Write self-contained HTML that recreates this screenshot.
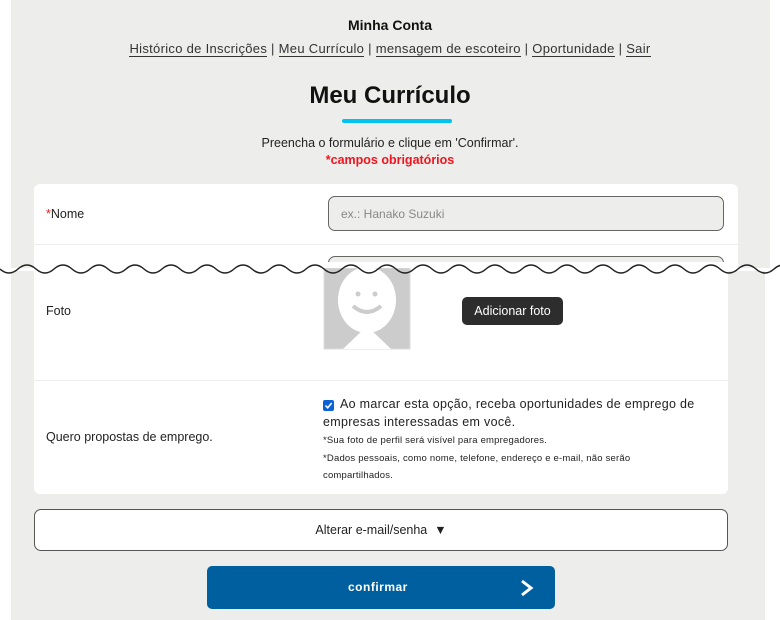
<!DOCTYPE html>
<html><head><meta charset="utf-8"><style>
body{margin:0;width:780px;height:620px;background:#fff;font-family:"Liberation Sans",sans-serif;position:relative;overflow:hidden;color:#222}
.a{position:absolute}
.grey{background:#ededeb}
.card{background:#fff;border-radius:6px}
a{color:#333;text-decoration:none;border-bottom:1.5px solid #333}
</style></head><body>
<div class="a grey" style="left:11px;top:0;width:759px;height:268px"></div>
<div class="a" style="left:0;top:17px;width:780px;text-align:center;font-weight:bold;font-size:14px;color:#111">Minha Conta</div>
<div class="a" style="left:0;top:41px;width:780px;text-align:center;font-size:13px;color:#333;letter-spacing:0.3px">
<a>Histórico de Inscrições</a> | <a>Meu Currículo</a> | <a>mensagem de escoteiro</a> | <a>Oportunidade</a> | <a>Sair</a></div>
<div class="a" style="left:0;top:82px;width:780px;text-align:center;font-weight:bold;font-size:24px;color:#111">Meu Currículo</div>
<div class="a" style="left:342px;top:119px;width:110px;height:4px;border-radius:2px;background:#00c3ef"></div>
<div class="a" style="left:0;top:136px;width:780px;text-align:center;font-size:12.5px;color:#222">Preencha o formulário e clique em 'Confirmar'.</div>
<div class="a" style="left:0;top:153px;width:780px;text-align:center;font-size:12.5px;font-weight:bold;color:#f0141e">*campos obrigatórios</div>
<div class="a card" style="left:34px;top:184px;width:704px;height:90px"></div>
<div class="a" style="left:34px;top:244px;width:704px;height:1px;background:#eee"></div>
<div class="a" style="left:46px;top:207px;font-size:12.5px"><span style="color:#f0141e">*</span>Nome</div>
<div class="a" style="left:328px;top:196px;width:396px;height:35px;border:1px solid #666;border-radius:7px;background:#ededeb;box-sizing:border-box;font-size:12px;color:#888;padding:10px 12px">ex.: Hanako Suzuki</div>
<div class="a" style="left:328px;top:256px;width:396px;height:30px;border:1px solid #666;border-radius:7px;background:#ededeb;box-sizing:border-box"></div>

<div class="a grey" style="left:11px;top:268px;width:754px;height:352px;background:#ededeb"></div>
<div class="a" style="left:0;top:268px;width:780px;height:3px;background:#fff"></div>
<div class="a card" style="left:34px;top:262px;width:694px;height:232px;border-radius:0 0 6px 6px"></div>
<div class="a" style="left:34px;top:380px;width:694px;height:1px;background:#eee"></div>
<div class="a" style="left:46px;top:304px;font-size:12.5px">Foto</div>
<svg class="a" style="left:323px;top:268px" width="88" height="82"><rect x="1" y="0" width="86" height="81" fill="#ccc" stroke="#ddd"/><ellipse cx="44" cy="32" rx="29" ry="33" fill="#fff"/><circle cx="35" cy="26" r="2.5" fill="#ccc"/><circle cx="52" cy="26" r="2.5" fill="#ccc"/><path d="M30 38 Q44 50 58 38" stroke="#ccc" stroke-width="4" fill="none"/><path d="M44 58 L20 81 L68 81 Z" fill="#fff"/></svg>
<div class="a" style="left:462px;top:297px;width:101px;height:28px;background:#2d2d2d;border-radius:5px;color:#fff;font-size:12.5px;text-align:center;line-height:28px">Adicionar foto</div>
<div class="a" style="left:46px;top:430px;font-size:12.5px">Quero propostas de emprego.</div>
<div class="a" style="left:323px;top:398px;width:16px;height:12px"><svg width="11" height="11"><rect width="11" height="11" rx="2" fill="#0b62d6"/><path d="M2.5 5.5 L4.7 7.8 L8.7 3" stroke="#fff" stroke-width="1.6" fill="none"/></svg></div>
<div class="a" style="left:323px;top:396px;width:380px;font-size:12.5px;line-height:17.5px;letter-spacing:0.3px;text-indent:17px">Ao marcar esta opção, receba oportunidades de emprego de empresas interessadas em você.</div>
<div class="a" style="left:323px;top:432px;width:380px;font-size:9.5px;line-height:17.5px;letter-spacing:0.2px">*Sua foto de perfil será visível para empregadores.<br>*Dados pessoais, como nome, telefone, endereço e e-mail, não serão compartilhados.</div>
<div class="a" style="left:34px;top:509px;width:694px;height:42px;box-sizing:border-box;border:1px solid #555;border-radius:7px;background:#fff;text-align:center;line-height:40px;font-size:12.5px">Alterar e-mail/senha &nbsp;▼</div>
<div class="a" style="left:207px;top:566px;width:348px;height:43px;border-radius:5px;background:#00609f;color:#fff;font-weight:bold;font-size:12px;line-height:43px"><span style="position:absolute;left:141px;letter-spacing:0.5px">confirmar</span><svg style="position:absolute;left:312px;top:13px" width="16" height="18"><path d="M3 2 L12 9 L3 16" stroke="#fff" stroke-width="3" fill="none"/></svg></div>
<svg class="a" style="left:0;top:260px" width="780" height="18"><path d="M0 9 Q9 17 18 9 T36 9 T54 9 T72 9 T90 9 T108 9 T126 9 T144 9 T162 9 T180 9 T198 9 T216 9 T234 9 T252 9 T270 9 T288 9 T306 9 T324 9 T342 9 T360 9 T378 9 T396 9 T414 9 T432 9 T450 9 T468 9 T486 9 T504 9 T522 9 T540 9 T558 9 T576 9 T594 9 T612 9 T630 9 T648 9 T666 9 T684 9 T702 9 T720 9 T738 9 T756 9 T774 9 T792 9" stroke="#222" stroke-width="1.5" fill="none"/></svg>
</body></html>
